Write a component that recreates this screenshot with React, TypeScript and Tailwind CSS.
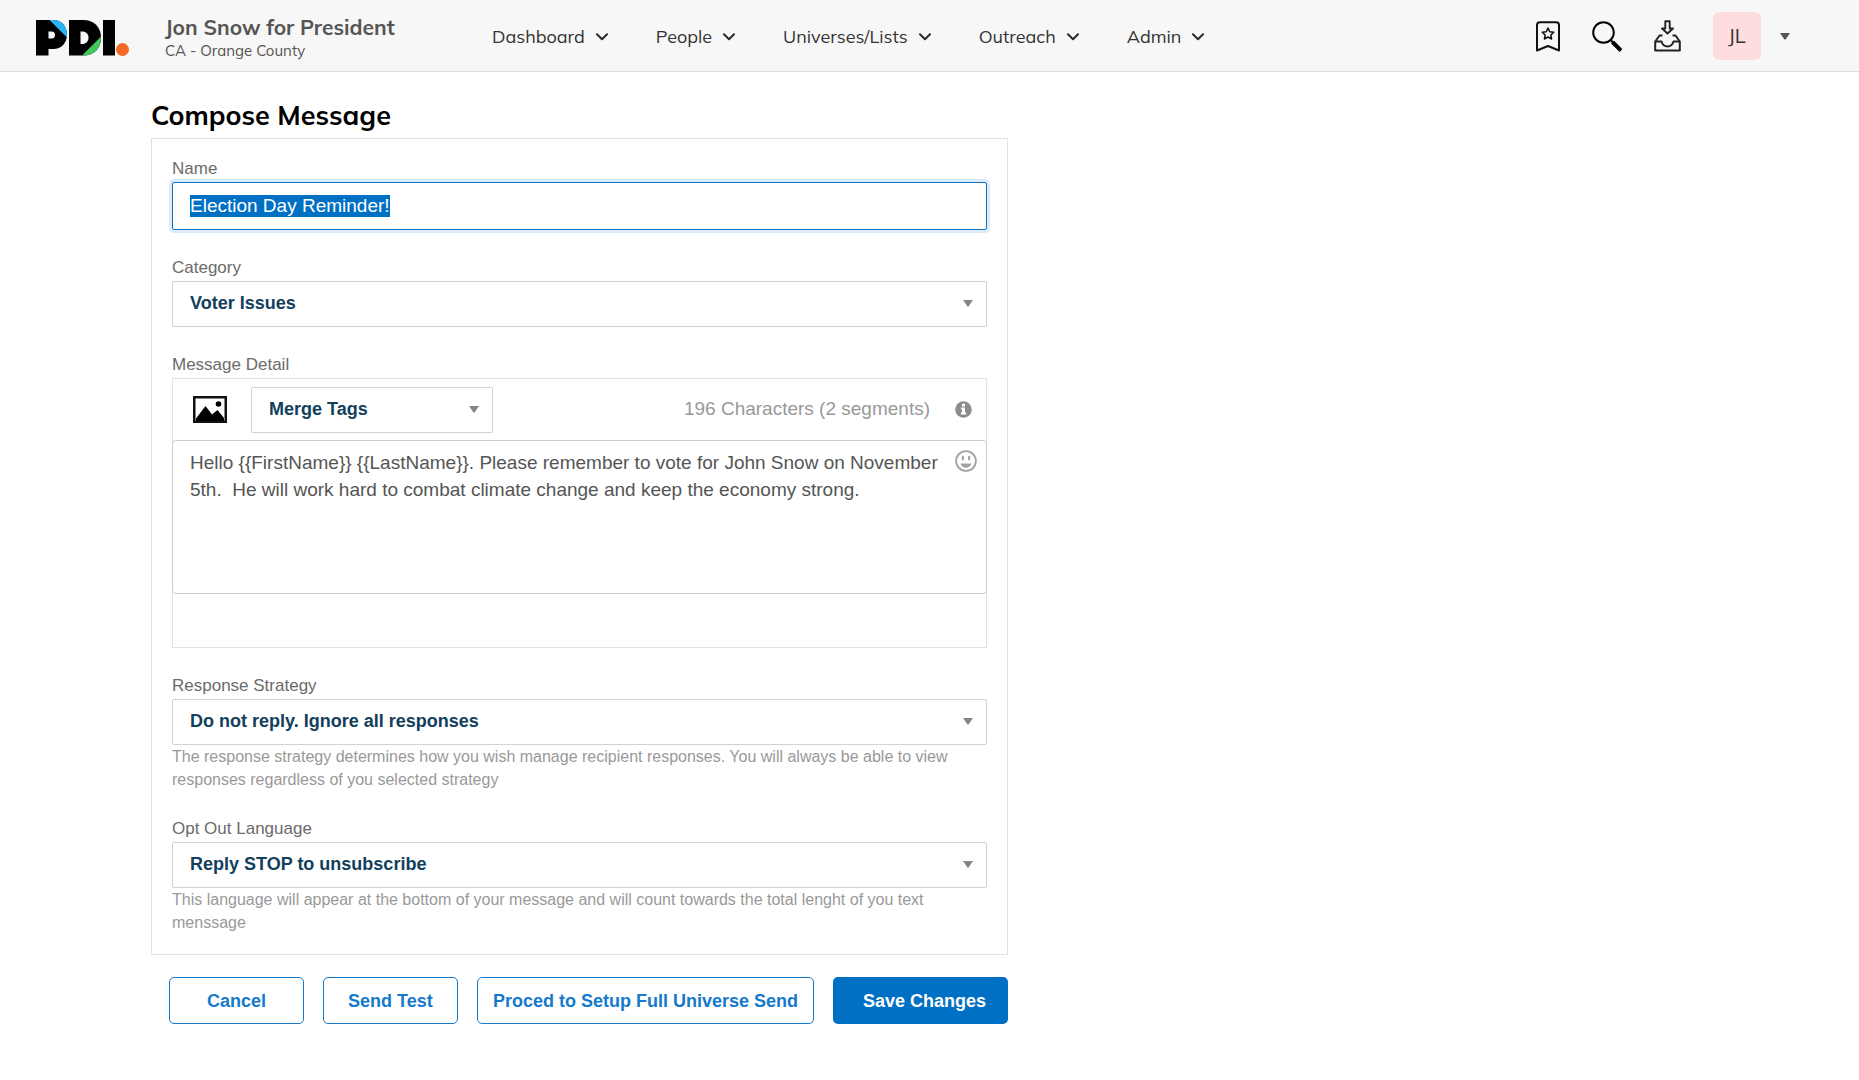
import React, { useEffect, useRef, useState } from 'react'

const NAV = ['Dashboard', 'People', 'Universes/Lists', 'Outreach', 'Admin']

function Logo() {
  return (
    <svg width="94" height="36" viewBox="0 0 94 36" role="img" aria-label="PDI">
      <defs>
        <clipPath id="bowl-p">
          <path d="M0 0H17C25.500 0 31 6 31 14.500S25.500 29 17 29H12.500V35.500H0Z" />
        </clipPath>
        <clipPath id="bowl-d">
          <path d="M33 0H47C58 0 65 7 65 17.700S58 35.500 47 35.500H33Z" />
        </clipPath>
      </defs>
      <g clipPath="url(#bowl-p)">
        <rect width="32" height="36" fill="#000" />
        <path d="M13.500 0H32V18.500Z" fill="#29b6f6" />
      </g>
      <path d="M12.500 11.500H15.500A3.500 3.500 0 0 1 15.500 18.500H12.500Z" fill="#f7f7f7" />
      <g clipPath="url(#bowl-d)">
        <rect x="33" width="33" height="36" fill="#000" />
        <path d="M66 15.500V36H45.500Z" fill="#3fc75b" />
      </g>
      <path d="M44.500 11.500H46C50 11.500 52.500 14 52.500 17.700S50 24 46 24H44.500Z" fill="#f7f7f7" />
      <rect x="67" width="12" height="35.500" fill="#000" />
      <circle cx="86.500" cy="29.500" r="6.500" fill="#f26a25" />
    </svg>
  )
}

function Chevron() {
  return (
    <svg width="12" height="8" viewBox="0 0 12 8" fill="none" stroke="#2b2b2b" strokeWidth="2">
      <path d="M1 1.200L6 6.200L11 1.200" strokeLinecap="round" strokeLinejoin="round" />
    </svg>
  )
}

function Caret({ className }: { className?: string }) {
  return (
    <svg className={className} width="10" height="7" viewBox="0 0 10 7" fill="currentColor">
      <path d="M0 0H10L5.500 6.500H4.500Z" />
    </svg>
  )
}

function BookmarkIcon() {
  return (
    <svg width="24" height="31" viewBox="0 0 24 31" fill="none" stroke="#111" strokeLinejoin="round">
      <path d="M1 29.500V4Q1 1.200 3.800 1.200H20.200Q23 1.200 23 4V29.500L12 25Z" strokeWidth="2" />
      <path
        d="M12 7L13.700 10.800L17.800 11.200L14.800 14L15.600 18L12 16L8.400 18L9.200 14L6.200 11.200L10.300 10.800Z"
        strokeWidth="1.500"
      />
    </svg>
  )
}

function SearchIcon() {
  return (
    <svg width="30" height="31" viewBox="0 0 30 31" fill="none" stroke="#000">
      <circle cx="11.500" cy="11.500" r="10.300" strokeWidth="2" />
      <path d="M18.500 19L21 21.500" strokeWidth="2" />
      <path d="M20.500 21L29 29.500" strokeWidth="4" />
    </svg>
  )
}

function InboxIcon() {
  return (
    <svg width="27" height="32" viewBox="0 0 27 32" fill="none" stroke="#222" strokeWidth="2" strokeLinejoin="round">
      <path d="M11.300 1.300H15.700V8.500H19L13.500 13.500L8 8.500H11.300Z" strokeWidth="1.900" />
      <path d="M8.500 15.500H5.500L1.200 21.500V30.500H25.800V21.500L21.500 15.500H18.500" />
      <path d="M1.200 21.500H7.500Q9 26.500 13.500 26.500T19.500 21.500H25.800" />
    </svg>
  )
}

function ImageIcon() {
  return (
    <svg width="34" height="27" viewBox="0 0 34 27">
      <rect x="1.250" y="1.250" width="31.500" height="24.500" fill="#fff" stroke="#111" strokeWidth="2.500" />
      <path d="M3 22.500L12.500 10L19 18.500L24.500 14L31 22V25H3Z" fill="#000" />
      <circle cx="25.500" cy="8" r="2.800" fill="#000" />
    </svg>
  )
}

function InfoIcon() {
  return (
    <svg width="17" height="17" viewBox="0 0 17 17">
      <circle cx="8.500" cy="8.500" r="8.300" fill="#8c8c8c" />
      <rect x="7" y="2.800" width="3" height="2.600" fill="#fff" />
      <path d="M6 6.600H10V11.600H11.200V13.600H5.800V11.600H7V8.600H6Z" fill="#fff" />
    </svg>
  )
}

function SmileIcon() {
  return (
    <svg width="22" height="22" viewBox="0 0 22 22" fill="none">
      <circle cx="11" cy="11" r="9.900" stroke="#a3a3a3" strokeWidth="1.800" />
      <rect x="6.800" y="5.800" width="2.200" height="4.600" rx="1.100" fill="#a3a3a3" />
      <rect x="13" y="5.800" width="2.200" height="4.600" rx="1.100" fill="#a3a3a3" />
      <path d="M5.500 13.500H16.500Q15 17.800 11 17.800T5.500 13.500Z" fill="#a3a3a3" />
    </svg>
  )
}

interface SelectProps {
  id?: string
  label?: string
  options: string[]
}

function SelectBox({ id, label, options }: SelectProps) {
  return (
    <div className="relative">
      <select
        id={id}
        aria-label={label}
        className="block h-[46px] w-full appearance-none rounded-xs border border-[#cdd2d9] bg-white pr-10 pb-0.5 pl-[17px] text-lg font-bold text-[#12405c]"
      >
        {options.map((o) => (
          <option key={o}>{o}</option>
        ))}
      </select>
      <Caret className="pointer-events-none absolute top-[19px] right-3.5 text-[#858585]" />
    </div>
  )
}

function FieldLabel({ htmlFor, children }: { htmlFor: string; children: React.ReactNode }) {
  return (
    <label htmlFor={htmlFor} className="block pb-px text-[17px] leading-[25px] text-[#6b6b6b]">
      {children}
    </label>
  )
}

function Header() {
  return (
    <header className="flex h-[72px] items-center border-b border-[#dcdcdc] bg-[#f7f7f7] pr-[69px] pl-9 font-[Mulish,Lato,sans-serif]">
      <a href="#home" className="shrink-0 pt-1">
        <Logo />
      </a>
      <div className="ml-[35px] w-[292px] shrink-0 pt-0.5 text-[#555]">
        <div className="text-[21px] leading-7 font-bold">Jon Snow for President</div>
        <div className="text-[15px] leading-5">CA - Orange County</div>
      </div>
      <nav className="ml-[35px] flex items-center gap-12 pt-0.5">
        {NAV.map((item) => (
          <button key={item} type="button" className="flex items-center gap-[11px] text-lg leading-6 text-[#333]">
            {item}
            <Chevron />
          </button>
        ))}
      </nav>
      <div className="ml-auto flex items-center gap-8 pt-px">
        <button type="button" aria-label="Bookmarks">
          <BookmarkIcon />
        </button>
        <button type="button" aria-label="Search">
          <SearchIcon />
        </button>
        <button type="button" aria-label="Downloads">
          <InboxIcon />
        </button>
        <button type="button" aria-label="Account JL" className="flex items-center gap-[19px] text-xl text-[#333]">
          <span className="flex size-12 items-center justify-center rounded-md bg-[#fddde0]">JL</span>
          <Caret className="text-[#555]" />
        </button>
      </div>
    </header>
  )
}

export default function App() {
  const nameRef = useRef<HTMLInputElement>(null)
  const [name, setName] = useState('Election Day Reminder!')
  const [message, setMessage] = useState(
    'Hello {{FirstName}} {{LastName}}. Please remember to vote for John Snow on November 5th.  He will work hard to combat climate change and keep the economy strong.',
  )

  useEffect(() => {
    nameRef.current?.focus()
    nameRef.current?.select()
  }, [])

  const outlined =
    'h-[47px] rounded-[5px] border border-[#1579cc] bg-white text-lg font-bold text-[#1579cc]'

  return (
    <div className="min-h-screen bg-white font-['Liberation_Sans',Arial,sans-serif]">
      <Header />
      <main className="px-[151px] pt-[25px]">
        <form className="w-full max-w-[857px]" onSubmit={(e) => e.preventDefault()}>
          <h1 className="pb-[5px] font-[Mulish,Lato,sans-serif] text-[27px] leading-9 font-bold text-black">Compose Message</h1>

          <div className="flex flex-col gap-[25px] border border-[#e2e2e2] px-5 pt-[17px] pb-5">
            <div>
              <FieldLabel htmlFor="name">Name</FieldLabel>
              <input
                id="name"
                ref={nameRef}
                value={name}
                onChange={(e) => setName(e.target.value)}
                className="block h-12 w-full rounded-xs border border-[#1172c4] px-[17px] text-[19px] text-[#555] ring-3 ring-[#dcecf8] outline-none selection:bg-[#0070c5] selection:text-white"
              />
            </div>

            <div>
              <FieldLabel htmlFor="category">Category</FieldLabel>
              <SelectBox id="category" options={['Voter Issues']} />
            </div>

            <div>
              <FieldLabel htmlFor="message">Message Detail</FieldLabel>
              <div className="border border-[#e2e2e2]">
                <div className="flex h-[61px] items-center pr-3.5 pl-5">
                  <button type="button" aria-label="Insert image">
                    <ImageIcon />
                  </button>
                  <div className="ml-6 w-[242px]">
                    <SelectBox label="Merge tags" options={['Merge Tags']} />
                  </div>
                  <span className="ml-auto text-[19px] text-[#999]">196 Characters (2 segments)</span>
                  <button type="button" aria-label="Segment info" className="ml-[25px]">
                    <InfoIcon />
                  </button>
                </div>
                <div className="relative -mx-px">
                  <textarea
                    id="message"
                    value={message}
                    onChange={(e) => setMessage(e.target.value)}
                    className="block h-[154px] w-full resize-none rounded-sm border border-[#ccc] py-2 pr-10 pl-[17px] text-[19px] leading-[27px] text-[#555]"
                  />
                  <button type="button" aria-label="Insert emoji" className="absolute top-2.5 right-2.5">
                    <SmileIcon />
                  </button>
                </div>
                <div className="h-[53px]" />
              </div>
            </div>

            <div>
              <FieldLabel htmlFor="strategy">Response Strategy</FieldLabel>
              <SelectBox id="strategy" options={['Do not reply. Ignore all responses']} />
              <p className="text-base leading-[23px] text-[#999]">
                The response strategy determines how you wish manage recipient responses. You will always be able to view
                responses regardless of you selected strategy
              </p>
            </div>

            <div>
              <FieldLabel htmlFor="optout">Opt Out Language</FieldLabel>
              <SelectBox id="optout" options={['Reply STOP to unsubscribe']} />
              <p className="text-base leading-[23px] text-[#999]">
                This language will appear at the bottom of your message and will count towards the total lenght of you text
                menssage
              </p>
            </div>
          </div>

          <div className="flex justify-end gap-[19px] pt-[22px]">
            <button type="button" className={`${outlined} w-[135px]`}>
              Cancel
            </button>
            <button type="button" className={`${outlined} w-[135px]`}>
              Send Test
            </button>
            <button type="button" className={`${outlined} px-[15px]`}>
              Proced to Setup Full Universe Send
            </button>
            <button type="submit" className="h-[47px] w-[175px] rounded-[5px] bg-[#0070c5] pl-2 text-lg font-bold text-white">
              Save Changes
            </button>
          </div>
        </form>
      </main>
    </div>
  )
}
